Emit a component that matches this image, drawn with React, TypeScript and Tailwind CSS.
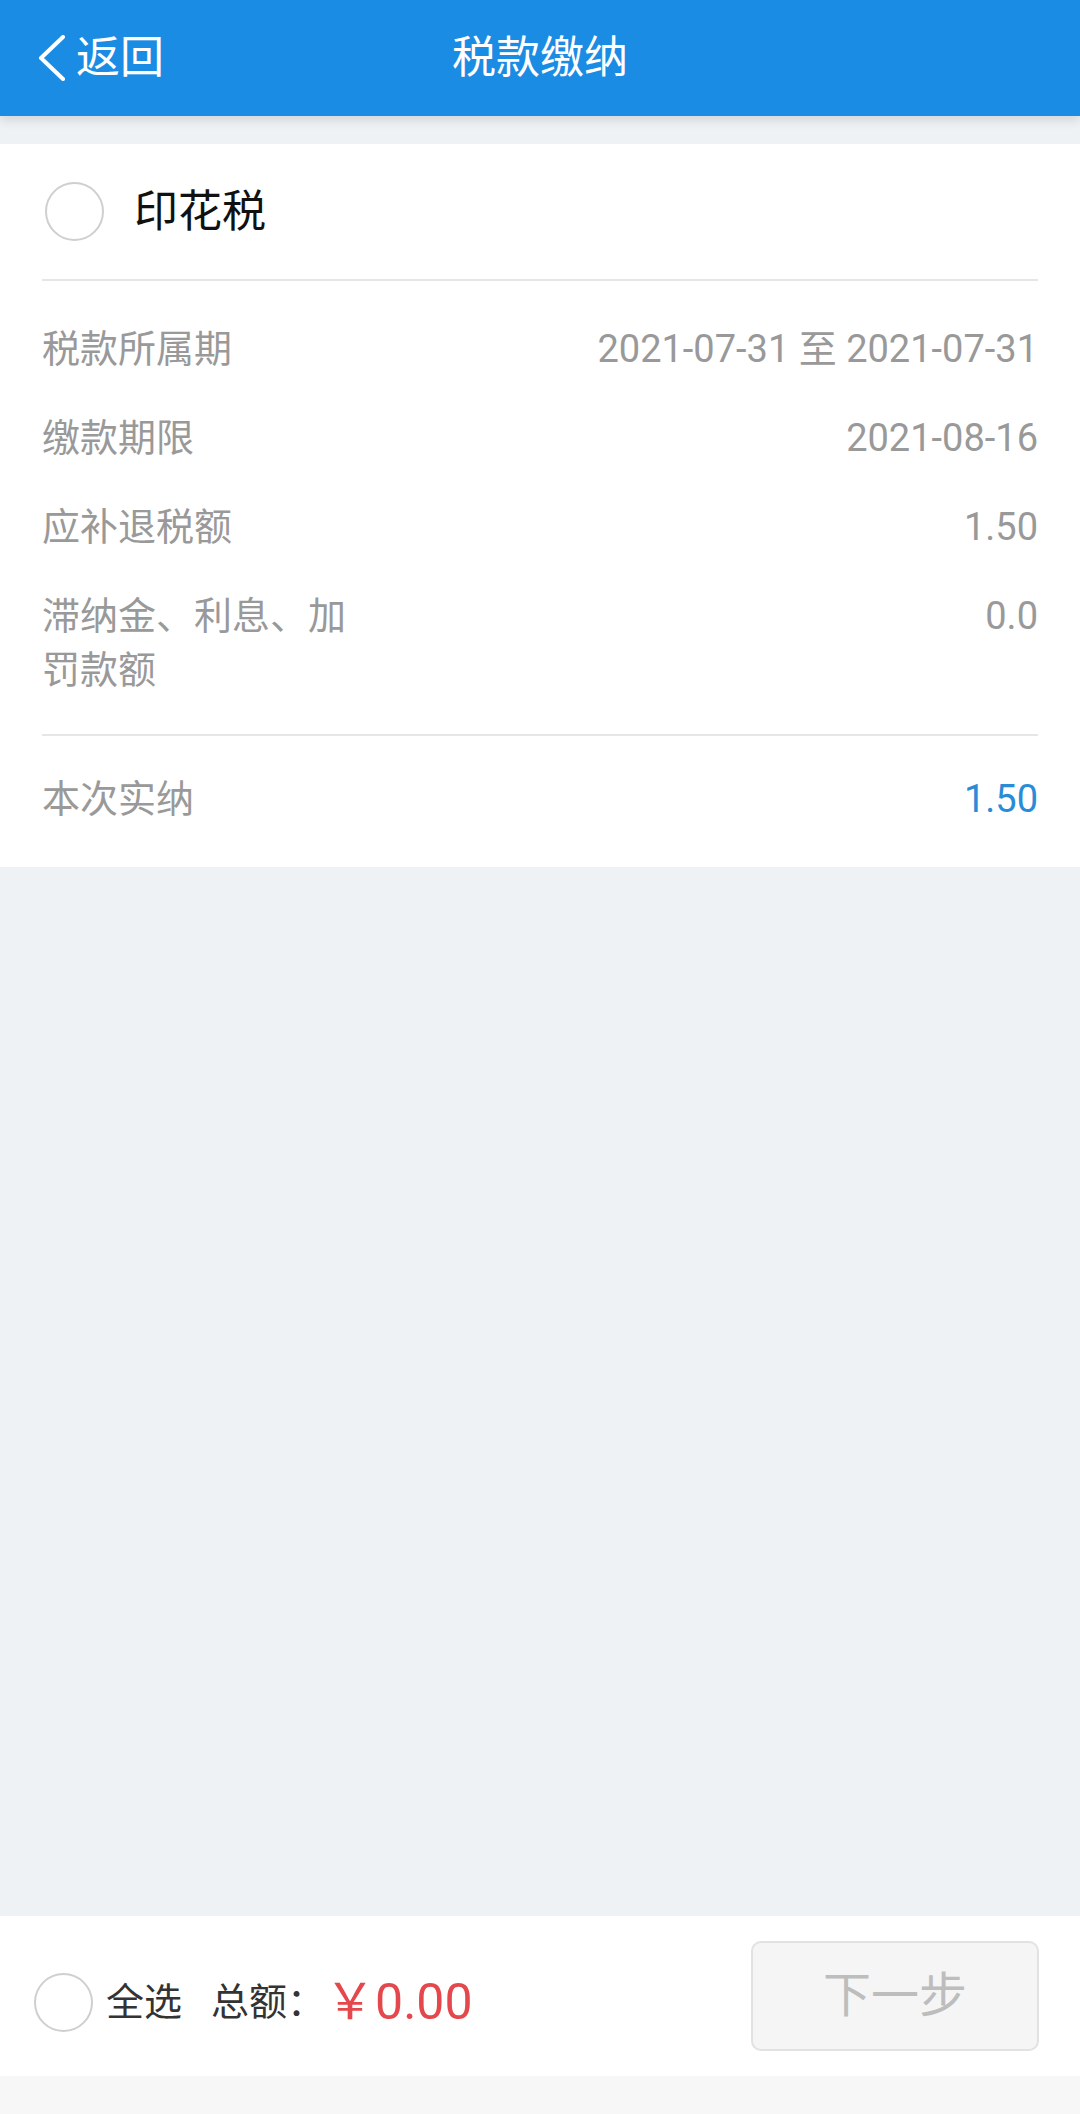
import { useState } from "react";

const font = { fontFamily: "Roboto, 'Noto Sans CJK SC', sans-serif" };

const rows = [
  { label: "税款所属期", value: "2021-07-31 至 2021-07-31" },
  { label: "缴款期限", value: "2021-08-16" },
  { label: "应补退税额", value: "1.50" },
  { label: "滞纳金、利息、加罚款额", value: "0.0" },
];

const Radio = ({ checked, onClick }: { checked: boolean; onClick: () => void }) => (
  <button
    onClick={onClick}
    className={`h-[59px] w-[59px] shrink-0 rounded-full border-2 ${
      checked ? "border-[#1b8ce4] bg-[#1b8ce4]" : "border-[#cfcfcf] bg-white"
    }`}
  />
);

const Header = () => (
  <header className="relative z-10 flex h-[116px] items-center bg-[#1b8ce4] px-[37px] text-white shadow-[0_4px_10px_rgba(0,0,0,0.12)]">
    <div className="flex items-center gap-[10px]">
      <svg width="29" height="46" viewBox="0 0 29 46" fill="none">
        <path d="M26 2 L4 23 L26 44" stroke="white" strokeWidth="4" strokeLinecap="round" strokeLinejoin="round" />
      </svg>
      <span className="text-[44px] leading-none">返回</span>
    </div>
    <h1 className="absolute left-1/2 -translate-x-1/2 text-[44px] leading-none">税款缴纳</h1>
  </header>
);

const TaxCard = () => {
  const [checked, setChecked] = useState(false);
  return (
    <section className="bg-white">
      <div className="flex h-[135px] items-center gap-[30px] px-[45px]">
        <Radio checked={checked} onClick={() => setChecked((p) => !p)} />
        <span className="text-[44px] text-[#111]">印花税</span>
      </div>
      <div className="mx-[42px] border-t-2 border-[#e6e6e6]" />
      <div className="flex flex-col gap-[35px] px-[42px] pt-[41px] pb-[37px] text-[38px] leading-[54px] text-[#999]">
        {rows.map((r) => (
          <div key={r.label} className="flex items-start justify-between">
            <span className="w-[320px]">{r.label}</span>
            <span>{r.value}</span>
          </div>
        ))}
      </div>
      <div className="mx-[42px] border-t-2 border-[#e6e6e6]" />
      <div className="flex items-center justify-between px-[42px] pt-[36px] pb-[41px] text-[38px] leading-[54px]">
        <span className="text-[#999]">本次实纳</span>
        <span className="text-[#2a8cd6]">1.50</span>
      </div>
    </section>
  );
};

const BottomBar = () => {
  const [all, setAll] = useState(false);
  return (
    <footer className="flex h-[160px] items-center justify-between bg-white pr-[41px] pl-[34px]">
      <div className="flex items-center pt-[12px]">
        <Radio checked={all} onClick={() => setAll((p) => !p)} />
        <span className="ml-[13px] text-[38px] text-[#333]">全选</span>
        <span className="ml-[29px] text-[38px] text-[#333]">总额：</span>
        <span className="text-[50px] text-[#e4474c]">￥0.00</span>
      </div>
      <button className="h-[110px] w-[288px] rounded-[10px] border-2 border-[#e2e2e2] bg-[#f5f5f5] text-[48px] text-[#bdbdbd]">
        下一步
      </button>
    </footer>
  );
};

const App = () => {
  return (
    <div style={font} className="flex h-[2114px] w-[1080px] flex-col bg-[#eef2f5]">
      <Header />
      <div className="h-[28px]" />
      <TaxCard />
      <div className="flex-1" />
      <BottomBar />
      <div className="h-[38px] bg-[#f7f7f7]" />
    </div>
  );
};

export default App;
